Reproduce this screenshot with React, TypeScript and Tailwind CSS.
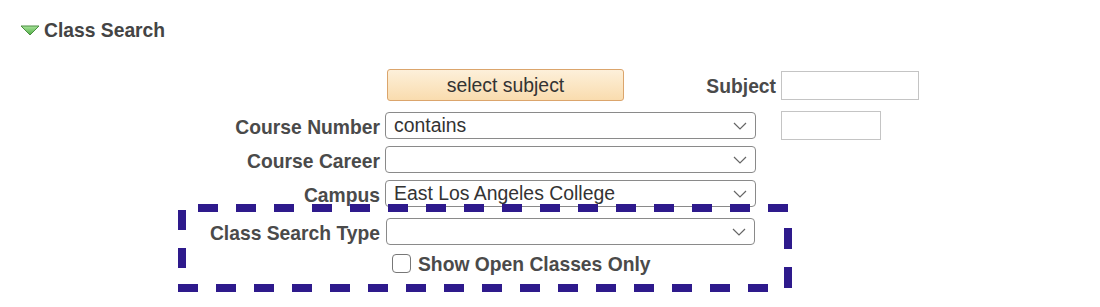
import React from "react";

const font = { fontFamily: '"Liberation Sans", Arial, Helvetica, sans-serif' };

function Chevron() {
  return (
    <svg width="14" height="8" viewBox="0 0 14 8" className="shrink-0">
      <polyline points="1,1 7,7 13,1" fill="none" stroke="#666" strokeWidth="1.2" />
    </svg>
  );
}

function SelectBox({ value = "", w = "w-[371px]" }: { value?: string; w?: string }) {
  return (
    <div
      className={`${w} h-[27px] flex items-center justify-between border border-[#8a8a8a] rounded-[4px] bg-white pl-[8px] pr-[8px] text-[19.4px] text-[#333] leading-none`}
    >
      <span>{value}</span>
      <Chevron />
    </div>
  );
}

function Row({ label, children, mt }: { label: string; children: React.ReactNode; mt: string }) {
  return (
    <div className={`flex items-center ${mt}`}>
      <div className="w-[380px] text-right text-[19.3px] font-bold text-[#4a4a4a] leading-none pt-[3px]">
        {label}
      </div>
      <div className="ml-[5px] flex items-center">{children}</div>
    </div>
  );
}

export default function App() {
  return (
    <div className="relative w-[1100px] h-[307px] bg-white overflow-hidden" style={font}>
      {/* header */}
      <div className="flex items-center pl-[20px] pt-[21px]">
        <svg width="20" height="11" viewBox="0 0 20 11">
          <defs>
            <linearGradient id="tri" x1="0" y1="0" x2="0" y2="1">
              <stop offset="0" stopColor="#a8e39a" />
              <stop offset="1" stopColor="#4fae45" />
            </linearGradient>
          </defs>
          <polygon points="1,1 19,1 10,10" fill="url(#tri)" stroke="#4a8d40" strokeWidth="1" strokeLinejoin="round" />
        </svg>
        <span className="ml-[4px] text-[19.3px] font-bold text-[#444] leading-none">Class Search</span>
      </div>

      {/* form */}
      <div className="mt-[29px]">
        <div className="flex items-center">
          <div className="w-[387px]" />
          <button className="w-[237px] h-[32px] rounded-[3px] border border-[#dba56c] bg-gradient-to-b from-[#fdf0da] to-[#f9dcae] text-[19.4px] text-[#333] leading-none">
            select subject
          </button>
          <div className="w-[152px] text-right text-[19.3px] font-bold text-[#4a4a4a] leading-none pt-[3px]">
            Subject
          </div>
          <div className="ml-[5px] w-[138px] h-[29px] border border-[#c4c4c4] bg-white" />
        </div>

        <Row label="Course Number" mt="mt-[10px]">
          <SelectBox value="contains" />
          <div className="ml-[25px] w-[100px] h-[29px] border border-[#c4c4c4] bg-white" />
        </Row>
        <Row label="Course Career" mt="mt-[6px]">
          <SelectBox />
        </Row>
        <Row label="Campus" mt="mt-[7px]">
          <SelectBox value="East Los Angeles College" />
        </Row>
        <Row label="Class Search Type" mt="mt-[11px]">
          <div className="ml-[1px]">
            <SelectBox w="w-[369px]" />
          </div>
        </Row>
        <div className="flex items-center mt-[7px]">
          <div className="w-[392px]" />
          <div className="w-[19px] h-[19px] border border-[#777] rounded-[4px] bg-white" />
          <span className="ml-[7px] text-[19.3px] font-bold text-[#4a4a4a] leading-none pt-[3px]">
            Show Open Classes Only
          </span>
        </div>
      </div>

      {/* annotation dashed box */}
      <svg className="absolute left-0 top-0 pointer-events-none" width="1100" height="307">
        <g stroke="#2e1a8c" strokeWidth="8" fill="none">
          <line x1="198" y1="208" x2="793" y2="208" strokeDasharray="20 18" />
          <line x1="182" y1="210" x2="182" y2="270" strokeDasharray="20 18" />
          <line x1="178" y1="288" x2="772" y2="288" strokeDasharray="20 18" />
          <line x1="788" y1="228" x2="788" y2="290" strokeDasharray="21 18" />
        </g>
      </svg>
    </div>
  );
}
